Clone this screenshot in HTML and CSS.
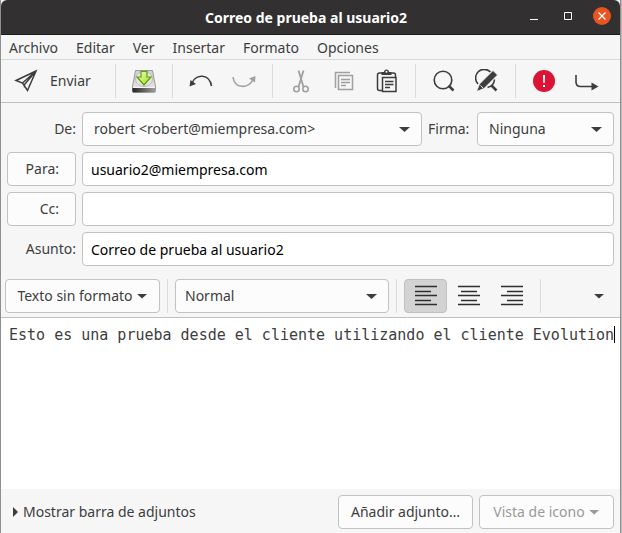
FILE: index.html
```html
<!DOCTYPE html>
<html lang="es">
<head>
<meta charset="utf-8">
<meta name="viewport" content="width=device-width, initial-scale=1">
<title>Correo de prueba al usuario2</title>
<link rel="stylesheet" href="styles.css">
</head>
<body>
<div class="window">
  <header class="titlebar">
    <h1 class="title">Correo de prueba al usuario2</h1>
    <div class="window-controls">
      <button class="wm" aria-label="Minimizar"><svg width="10" height="10" viewBox="0 0 10 10"><path d="M1 8.500H9" stroke="#fff"/></svg></button>
      <button class="wm" aria-label="Maximizar"><svg width="10" height="10" viewBox="0 0 10 10"><path d="M1.500 1.500h7v7h-7z" fill="none" stroke="#fff"/></svg></button>
      <button class="wm wm-close" aria-label="Cerrar"><svg width="10" height="10" viewBox="0 0 10 10"><path d="M1.500 1.500l7 7M8.500 1.500l-7 7" stroke="#fff" stroke-width="1.300"/></svg></button>
    </div>
  </header>

  <nav class="menubar">
    <button>Archivo</button>
    <button>Editar</button>
    <button>Ver</button>
    <button>Insertar</button>
    <button>Formato</button>
    <button>Opciones</button>
  </nav>

  <div class="toolbar">
    <button class="send">
      <svg width="24" height="24" viewBox="0 0 24 24" fill="none" stroke="#3d3d3d" stroke-width="1.500"><path d="M22 2L2 11.500l6.500 2.500L13.500 21.500zM22 2L8.500 14M22 2L10.500 15.500v3"/></svg>
      Enviar
    </button>
    <span class="sep"></span>
    <button class="tool" aria-label="Guardar borrador">
      <svg width="26" height="26" viewBox="0 0 26 26">
        <defs>
          <linearGradient id="case" x1="0" y1="0" x2="0" y2="1"><stop offset="0" stop-color="#d0d0d0"/><stop offset="1" stop-color="#e8e8e8"/></linearGradient>
          <linearGradient id="front" x1="0" y1="0" x2="1" y2="0"><stop offset="0" stop-color="#242424"/><stop offset="1" stop-color="#a0a0a0"/></linearGradient>
          <linearGradient id="leaf" x1="0" y1="0" x2="1" y2="1"><stop offset="0" stop-color="#f2fbc0"/><stop offset="1" stop-color="#9fdc22"/></linearGradient>
        </defs>
        <path d="M4.500 2.500h17l3 16v4.500q0 1-1 1H2.500q-1 0-1-1v-4.500z" fill="url(#case)" stroke="#999"/>
        <ellipse cx="13" cy="11" rx="8.500" ry="7.500" fill="#e6e6e6" stroke="#bbb"/>
        <path d="M1.500 20h23v3.500q0 1-1 1H2.500q-1 0-1-1z" fill="url(#front)"/>
        <path d="M2 19.500h22" stroke="#f4f4f4"/>
        <path d="M10 3.500h6v5.500h4L13 17 6 9h4z" fill="url(#leaf)" stroke="#5da000" stroke-width="1.200"/>
      </svg>
    </button>
    <span class="sep"></span>
    <button class="tool" aria-label="Deshacer">
      <svg width="24" height="24" viewBox="0 0 24 24"><path d="M3 14C7 4.500 20.500 4.500 22.500 17" fill="none" stroke="#3d3d3d" stroke-width="1.600"/><path d="M0.500 17.500L1.500 11l5.500 4z" fill="#3d3d3d"/></svg>
    </button>
    <button class="tool" aria-label="Rehacer" disabled>
      <svg width="24" height="24" viewBox="0 0 24 24"><path d="M1 8C2.500 20 16.500 20 21 10.500" fill="none" stroke="#a0a0a0" stroke-width="1.600"/><path d="M23.500 7L23 13.500 17 9.500z" fill="#a0a0a0"/></svg>
    </button>
    <span class="sep"></span>
    <button class="tool" aria-label="Cortar" disabled>
      <svg width="24" height="24" viewBox="0 0 24 24" fill="none" stroke="#a0a0a0" stroke-width="1.600"><path d="M9.500 1.500L14.500 18M14.500 1.500L9.500 18" stroke-width="1.800"/><circle cx="7.500" cy="20" r="2.700"/><circle cx="16.500" cy="20" r="2.700"/></svg>
    </button>
    <button class="tool" aria-label="Copiar" disabled>
      <svg width="24" height="24" viewBox="0 0 24 24" fill="none" stroke="#a0a0a0" stroke-width="1.500"><path d="M3.500 19V3.500H18M6.500 6.500h14v14h-14zM9 10.500h9M9 13.500h9M9 16.500h5"/></svg>
    </button>
    <button class="tool" aria-label="Pegar">
      <svg width="24" height="24" viewBox="0 0 24 24" fill="none" stroke="#3d3d3d" stroke-width="1.500"><path d="M7 21.500H4.500q-2 0-2-2V6q0-2 2-2h14q2 0 2 2v2M7.500 8.500h13.500v14H7.500zM10 12.500h8.500M10 15.500h8.500M10 18.500h5"/><path d="M6.500 3h2.500q0-2.500 2.500-2.500T14 3h2.500v3h-10z" fill="#3d3d3d" stroke="none"/><circle cx="11.500" cy="2.800" r="1" fill="#fff" stroke="none"/></svg>
    </button>
    <span class="sep"></span>
    <button class="tool" aria-label="Buscar">
      <svg width="24" height="24" viewBox="0 0 24 24" fill="none" stroke="#3d3d3d"><circle cx="11" cy="11" r="8.800" stroke-width="1.600"/><path d="M16.500 16.500l5 5" stroke-width="2.500"/></svg>
    </button>
    <button class="tool" aria-label="Buscar y reemplazar">
      <svg width="24" height="24" viewBox="0 0 24 24" fill="none" stroke="#3d3d3d"><path d="M3 15A8.500 8.500 0 0 1 15.500 3M19.500 10.500a9 9 0 0 1-7 8" stroke-width="1.600"/><path d="M16.500 16.500l5 5" stroke-width="2.500"/><path d="M18 1.500l4.500 4.500L9 19.500l-7.500 3L4.500 15z" fill="#3d3d3d" stroke="#f6f6f6" stroke-width=".8"/><path d="M5.500 16.500l2.500 2.500" stroke="#f6f6f6"/></svg>
    </button>
    <span class="sep"></span>
    <button class="tool" aria-label="Prioridad alta">
      <svg width="24" height="24" viewBox="0 0 24 24"><circle cx="12" cy="12" r="11" fill="#db1436"/><path d="M11 6h2l-.300 8h-1.400zM11 16h2v2h-2z" fill="#fff"/></svg>
    </button>
    <button class="tool" aria-label="Más opciones">
      <svg width="24" height="24" viewBox="0 0 24 24"><path d="M1 6v7q0 4.500 4.500 4.500h12" fill="none" stroke="#3d3d3d" stroke-width="1.600"/><path d="M16.500 13.500l7 4-7 4z" fill="#3d3d3d"/></svg>
    </button>
  </div>

  <form class="headers">
    <label class="caption" for="from">De:</label>
    <div class="from-row">
      <span class="dropdown grow"><select id="from"><option>robert &lt;robert@miempresa.com&gt;</option></select></span>
      <label class="signature-label" for="signature">Firma:</label>
      <span class="dropdown signature"><select id="signature"><option>Ninguna</option></select></span>
    </div>
    <button type="button" class="button recipient" id="to-button">Para:</button>
    <input class="field" type="text" aria-labelledby="to-button" value="usuario2@miempresa.com">
    <button type="button" class="button recipient" id="cc-button">Cc:</button>
    <input class="field" type="text" aria-labelledby="cc-button">
    <label class="caption" for="subject">Asunto:</label>
    <input class="field" type="text" id="subject" value="Correo de prueba al usuario2">
  </form>

  <div class="formatbar">
    <button class="button mode">Texto sin formato <span class="arrow"></span></button>
    <span class="sep"></span>
    <span class="dropdown style"><select aria-label="Estilo de párrafo"><option>Normal</option></select></span>
    <span class="sep"></span>
    <button class="align active" aria-label="Alinear a la izquierda" aria-pressed="true"><svg width="22" height="22" viewBox="0 0 22 22"><path d="M0 1.500h22M0 6.500h16M0 10.500h22M0 15.500h16M0 19.500h22"/></svg></button>
    <button class="align" aria-label="Centrar"><svg width="22" height="22" viewBox="0 0 22 22"><path d="M0 1.500h22M3 6.500h16M0 10.500h22M3 15.500h16M0 19.500h22"/></svg></button>
    <button class="align" aria-label="Alinear a la derecha"><svg width="22" height="22" viewBox="0 0 22 22"><path d="M0 1.500h22M6 6.500h16M0 10.500h22M6 15.500h16M0 19.500h22"/></svg></button>
    <span class="sep"></span>
    <button class="overflow" aria-label="Más formatos"><span class="arrow"></span></button>
  </div>

  <main class="editor">
    <textarea aria-label="Mensaje" spellcheck="false">Esto es una prueba desde el cliente utilizando el cliente Evolution</textarea>
    <span class="caret"></span>
  </main>

  <footer class="attachments">
    <button class="expander"><span class="expander-arrow"></span>Mostrar barra de adjuntos</button>
    <button class="button attach">Añadir adjunto…</button>
    <button class="button view" disabled>Vista de icono <span class="arrow"></span></button>
  </footer>
</div>
</body>
</html>
```
FILE: styles.css
```css
* {
  box-sizing: border-box;
}

body {
  margin: 0;
  background: #bdbdbd;
  color: #3d3d3d;
  font: 14px/20px "Noto Sans", sans-serif;
}

button,
input,
select,
textarea {
  margin: 0;
  font: inherit;
  color: inherit;
}

button {
  padding: 0;
  border: 0;
  background: none;
  white-space: nowrap;
}

svg {
  display: block;
}

.window {
  display: flex;
  flex-direction: column;
  min-height: 100vh;
  margin-right: 1px;
  border: solid #8f8f8f;
  border-width: 0 1px;
  background: #f6f6f6;
}

/* Title bar */
.titlebar {
  display: grid;
  grid-template-columns: 1fr auto 1fr;
  align-items: center;
  height: 35px;
  padding: 2px 9px 0 0;
  border-bottom: 1px solid #1c1b1b;
  border-radius: 6px 6px 0 0;
  background: #323030;
  color: #fff;
}

.title {
  grid-column: 2;
  margin: 0;
  font-size: 14px;
  line-height: 20px;
  font-weight: 700;
}

.window-controls {
  display: flex;
  justify-content: flex-end;
  align-items: center;
  gap: 16px;
  padding-bottom: 4px;
}

.wm {
  display: grid;
  place-items: center;
  width: 18px;
  height: 18px;
  border-radius: 50%;
}

.wm-close {
  background: #e95420;
}

/* Menus and toolbars */
.menubar {
  display: flex;
  gap: 18px;
  height: 25px;
  padding: 2px 8px 0;
  border-bottom: 1px solid #d9d9d9;
}

.toolbar {
  display: flex;
  align-items: center;
  height: 43px;
  border-bottom: 1px solid #c0c0c0;
}

.send {
  display: flex;
  align-items: center;
  gap: 12px;
  width: 107px;
  padding-left: 13px;
}

.tool,
.align {
  display: grid;
  place-items: center;
  width: 43px;
  height: 34px;
}

.sep {
  width: 1px;
  height: 34px;
  margin: 0 6px 0 7px;
  background: #dcdcdc;
}

/* Message headers */
.headers {
  display: grid;
  grid-template-columns: 69px 1fr;
  align-items: center;
  gap: 6px;
  padding: 9px 6px 0;
}

.caption {
  text-align: right;
}

.from-row {
  display: flex;
  align-items: center;
  gap: 6px;
}

.button,
.field,
.dropdown select {
  height: 34px;
  border: 1px solid #c2c2c2;
  border-radius: 4px;
  background: #fcfcfc;
}

.field {
  width: 100%;
  padding: 0 8px;
  background: #fff;
  color: #000;
}

.recipient {
  padding-right: 16px;
  text-align: right;
}

.dropdown {
  position: relative;
  display: block;
}

.dropdown select {
  display: block;
  width: 100%;
  padding: 0 28px 0 11px;
  appearance: none;
}

.dropdown::after {
  content: "";
  position: absolute;
  top: 15px;
  right: 12px;
  width: 11px;
  height: 5px;
  background: #3d3d3d;
  clip-path: polygon(0 0, 100% 0, 50% 100%);
  pointer-events: none;
}

.grow {
  flex: 1;
}

.signature-label {
  min-width: 43px;
}

.signature {
  width: 137px;
}

.arrow {
  display: inline-block;
  width: 11px;
  height: 5px;
  background: currentColor;
  clip-path: polygon(0 0, 100% 0, 50% 100%);
}

/* Formatting bar */
.formatbar {
  display: flex;
  align-items: center;
  padding: 13px 6px 4px 4px;
  border-bottom: 1px solid #c0c0c0;
}

.formatbar .sep {
  margin: 0 7px;
}

.mode,
.view {
  display: flex;
  align-items: center;
  justify-content: center;
  gap: 4px;
}

.mode {
  width: 155px;
}

.style {
  width: 214px;
}

.style select {
  padding-left: 9px;
}

.align {
  border: 1px solid transparent;
  border-radius: 4px;
}

.align path {
  stroke: #2e2e2e;
  stroke-width: 1.4;
}

.active {
  border-color: #c0c0c0;
  background: #d3d3d3;
}

.overflow {
  display: grid;
  place-items: center;
  width: 30px;
  height: 34px;
  margin-left: auto;
}

/* Message body */
.editor {
  display: flex;
  flex: 1;
  align-items: flex-start;
  padding: 8px 0 8px 8px;
  background: #fff;
}

.editor textarea {
  field-sizing: content;
  padding: 0;
  border: 0;
  outline: 0;
  overflow: hidden;
  background: none;
  font: 15px/18px "DejaVu Sans Mono", monospace;
  white-space: pre;
  resize: none;
}

.caret {
  width: 1px;
  height: 17px;
  background: #000;
}

/* Attachment bar */
.attachments {
  display: flex;
  align-items: center;
  gap: 6px;
  height: 44px;
  padding: 2px 6px 0 12px;
}

.expander {
  display: flex;
  align-items: center;
  gap: 5px;
  margin-right: auto;
}

.expander-arrow {
  width: 5px;
  height: 10px;
  background: currentColor;
  clip-path: polygon(0 0, 100% 50%, 0 100%);
}

.attach,
.view {
  width: 135px;
}

.view {
  color: #9a9a9a;
}
```
